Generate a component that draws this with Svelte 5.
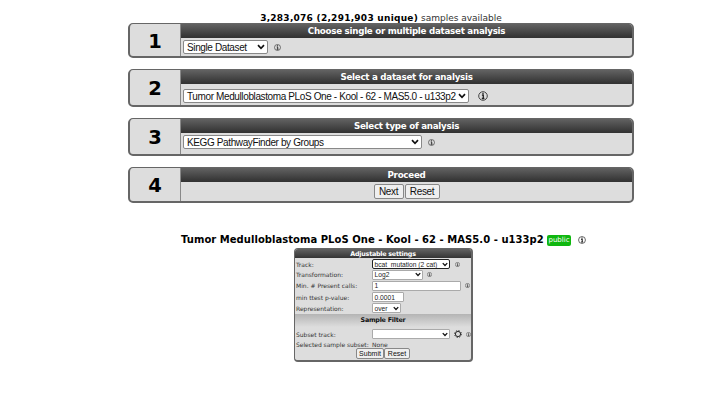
<script>
  const steps = [
    { n: 1, title: 'Choose single or multiple dataset analysis', gap: 0, h: 35, value: 'Single Dataset', w: 85, info: 6, size: 7, pad: 2 },
    { n: 2, title: 'Select a dataset for analysis', gap: 11, h: 38, value: 'Tumor Medulloblastoma PLoS One - Kool - 62 - MAS5.0 - u133p2', w: 286, info: 9, size: 10, pad: 5 },
    { n: 3, title: 'Select type of analysis', gap: 11, h: 38, value: 'KEGG PathwayFinder by Groups', w: 239, info: 6, size: 7, pad: 2 },
    { n: 4, title: 'Proceed', gap: 11, h: 36 }
  ];
  const fields = [
    { label: 'Track:', h: 10, value: 'bcat_mutation (2 cat)', w: 78, select: true, focus: true, info: 5 },
    { label: 'Transformation:', h: 11, value: 'Log2', w: 51, select: true, info: 4 },
    { label: 'Min. # Present calls:', h: 11, value: '1', w: 89, info: 4 },
    { label: 'min ttest p-value:', h: 12, value: '0.0001', w: 32 },
    { label: 'Representation:', h: 10, value: 'over', w: 29, select: true }
  ];
</script>

{#snippet info(size, left)}
  <svg class="icon" style:width="{size}px" style:height="{size}px" style:margin-left="{left}px" viewBox="0 0 10 10">
    <circle cx="5" cy="5" r="4.3" fill="none" stroke="#444" stroke-width="1" />
    <path d="M5 1.8v1.4M3.9 4.2H5.3V7.4M3.8 7.5h2.6" fill="none" stroke="#222" stroke-width="1.3" />
  </svg>
{/snippet}

{#snippet chevron()}
  <svg class="chevron" viewBox="0 0 8 6"><path d="M1 1.2L4 4.3L7 1.2" fill="none" stroke="#111" stroke-width="1.7" /></svg>
{/snippet}

<main>
  <p class="count"><b>3,283,076 (2,291,903 unique)</b> samples available</p>

  {#each steps as s}
    <section class="step" style:height="{s.h}px" style:margin-top="{s.gap}px">
      <div class="num">{s.n}</div>
      <div class="content">
        <h2>{s.title}</h2>
        {#if s.value}
          <div class="choice" style:padding-top="{s.pad}px">
            <div class="select" style:width="{s.w}px"><span>{s.value}</span>{@render chevron()}</div>
            {@render info(s.size, s.info)}
          </div>
        {:else}
          <div class="buttons"><button class="next">Next</button><button class="reset">Reset</button></div>
        {/if}
      </div>
    </section>
  {/each}

  <div class="dataset"><strong>Tumor Medulloblastoma PLoS One - Kool - 62 - MAS5.0 - u133p2</strong><span class="public">public</span>{@render info(8, 7)}</div>

  <section class="settings">
    <h3>Adjustable settings</h3>
    {#each fields as f}
      <div class="row" style:height="{f.h}px">
        <span class="label">{f.label}</span>
        <div class="field" class:focus={f.focus} style:width="{f.w}px"><span>{f.value}</span>{#if f.select}{@render chevron()}{/if}</div>
        {#if f.info}{@render info(5, f.info)}{/if}
      </div>
    {/each}
    <h4>Sample Filter</h4>
    <div class="row subset">
      <span class="label">Subset track:</span>
      <div class="field" style:width="78px"><span></span>{@render chevron()}</div>
      <svg class="gear" viewBox="0 0 16 16">
        <circle cx="8" cy="8" r="5.2" fill="none" stroke="#222" stroke-width="1.9" />
        <circle cx="8" cy="8" r="6.9" fill="none" stroke="#222" stroke-width="1.7" stroke-dasharray="2.7 2.72" />
      </svg>
      {@render info(5, 4)}
    </div>
    <div class="row selected"><span class="label">Selected sample subset:</span><span>None</span></div>
    <div class="submit"><button class="s1">Submit</button><button class="s2">Reset</button></div>
  </section>
</main>

<style>
  :global(body) { background: #fff; }
  main { height: 416px; box-sizing: border-box; padding-top: 12px; overflow: hidden; font-family: "DejaVu Sans", Verdana, sans-serif; color: #111; }
  .count { width: 506px; height: 11px; margin: 0 0 0 128px; font-size: 9px; line-height: 13px; text-align: center; white-space: nowrap; color: #333; }
  .count b { color: #000; letter-spacing: 0.26px; }
  .step { box-sizing: border-box; width: 506px; margin-left: 128px; display: flex; border: 1.5px solid #666; border-width: 1px 2px 2px; border-radius: 5px; background: #ddd; overflow: hidden; }
  .num { width: 51px; flex: none; display: flex; align-items: center; justify-content: center; border-right: 1px solid #888; font-weight: bold; font-size: 19.5px; color: #000; padding-top: 2px; box-sizing: border-box; }
  .content { flex: 1; min-width: 0; }
  h2 { margin: 0; height: 14px; line-height: 14px; box-sizing: border-box; border-bottom: 1px solid #333; background: linear-gradient(#626262, #343434); color: #fff; font-size: 8.7px; letter-spacing: -0.25px; text-align: center; white-space: nowrap; }
  .choice { display: flex; align-items: center; padding-left: 2px; }
  .icon { flex: none; display: block; }
  .select { box-sizing: border-box; height: 14px; display: flex; align-items: center; justify-content: space-between; padding: 0 2px 0 3px; border: 1px solid #888; border-radius: 2px; background: #fff; font: 10px/12px "Liberation Sans", Arial, sans-serif; letter-spacing: -0.38px; white-space: nowrap; }
  .select span { padding-top: 1px; line-height: 13px; }
  .chevron { width: 8px; height: 6px; flex: none; }
  .buttons { display: flex; justify-content: center; padding-top: 2px; gap: 1px; }
  button { box-sizing: border-box; margin: 0; padding: 0; border: 1px solid #888; border-radius: 2px; background: #efefef; color: #111; font: 10px/12px "Liberation Sans", Arial, sans-serif; text-align: center; }
  .buttons button { height: 15px; letter-spacing: -0.35px; }
  .next { width: 30px; }
  .reset { width: 35px; }
  .dataset { display: flex; align-items: center; height: 14px; margin: 30px 0 0 181px; white-space: nowrap; color: #000; }
  .dataset strong { width: 363px; font-size: 10px; line-height: 12px; letter-spacing: 0.04px; }
  .public { box-sizing: border-box; width: 24px; height: 11px; margin-left: 3px; border-radius: 2px; background: #0fb70f; color: #fff; font-size: 7px; line-height: 11px; text-align: center; }
  .settings { box-sizing: border-box; width: 179px; height: 114px; margin: 1px 0 0 294px; border: 1px solid #666; border-bottom-width: 2px; border-right-width: 2px; border-radius: 4px; background: #ddd; overflow: hidden; }
  h3, h4 { margin: 0; text-align: center; font-size: 6.4px; letter-spacing: -0.25px; white-space: nowrap; }
  h3 { height: 9px; margin-bottom: 1px; line-height: 10px; background: linear-gradient(#626262, #343434); color: #fff; }
  h4 { height: 13px; line-height: 13px; margin-top: 1px; background: linear-gradient(#b4b4b4, #ddd); color: #111; }
  .row { display: flex; align-items: center; font-size: 6px; white-space: nowrap; color: #333; }
  .label { box-sizing: border-box; flex: none; width: 77px; padding-left: 1px; }
  .field { box-sizing: border-box; height: 10px; flex: none; display: flex; align-items: center; justify-content: space-between; padding: 0 1px 0 1.5px; border: 1px solid #aaa; border-radius: 1px; background: #fff; font: 6.7px/8px "Liberation Sans", Arial, sans-serif; color: #222; }
  .focus { border-color: #222; border-radius: 2px; }
  .field span { padding-top: 1px; }
  .field .chevron { width: 6px; height: 5px; }
  .subset { height: 13px; padding-top: 1px; box-sizing: border-box; }
  .gear { width: 8px; height: 8px; flex: none; margin-left: 4px; }
  .selected { height: 8px; }
  .selected .label { letter-spacing: -0.04px; }
  .submit { display: flex; justify-content: center; }
  .submit button { height: 11px; font-size: 7px; line-height: 9px; }
  .s1 { width: 28px; }
  .s2 { width: 26px; }
</style>
